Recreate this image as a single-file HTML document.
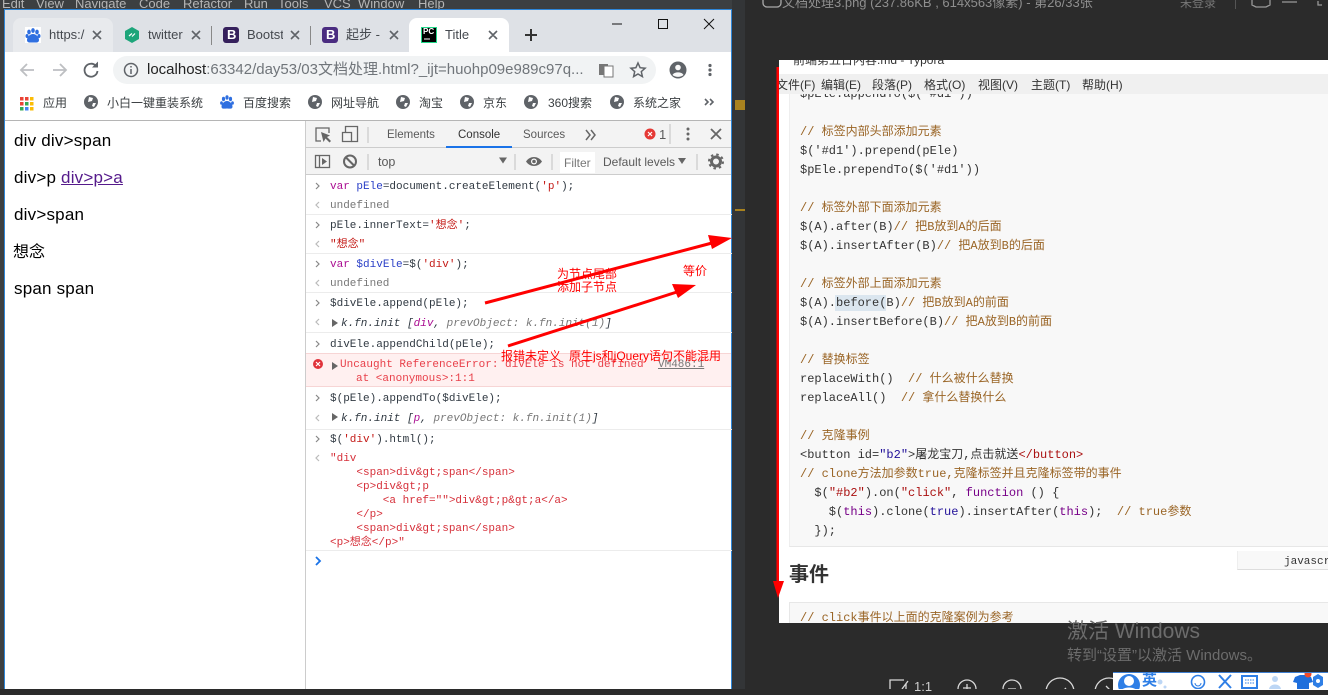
<!DOCTYPE html>
<html><head><meta charset="utf-8">
<style>
html,body{margin:0;padding:0;width:1328px;height:689px;overflow:hidden;background:#2b2b2b;font-family:"Liberation Sans","Noto Sans CJK SC",sans-serif}
.b{position:absolute}
.t{position:absolute;white-space:pre;line-height:16px}
.c{font:11px/16px "Liberation Mono","Noto Sans CJK SC",monospace;color:#303942;left:330px}
.g{color:#777}
.m{color:#aa0d91}.v{color:#2a3fc7}.s{color:#c41a16}.r{color:#d6303a}
.h{position:absolute;left:306px;width:426px;height:1px;background:#ececec}
.tab{font-size:13px;color:#45494f;width:36px;overflow:hidden;top:27px}
.bm{font-size:12px;color:#3c4043;top:95px}
.d{font-size:11.5px;color:#5a5a5a}
.p{position:absolute;white-space:pre;margin-top:1px;font:12px/16px "Liberation Mono","Noto Sans CJK SC",monospace;color:#333;left:21px}
.k{color:#9a6526}.q{color:#a11}.f{color:#708}.u{color:#219}
.a{color:#f00;font-size:12px;line-height:13px}
.mn{font-size:12px;color:#333;top:17px}
</style></head><body>

<!-- IDE behind -->
<div class="b" style="left:0;top:0;width:1328px;height:9px;background:#3c3f41"></div>
<div class="b" style="left:0;top:9px;width:5px;height:680px;background:#3c3f41"></div>
<div class="t" style="left:2px;top:-4px;font-size:13px;color:#b5b5b5">Edit</div>
<div class="t" style="left:36px;top:-4px;font-size:13px;color:#b5b5b5">View</div>
<div class="t" style="left:75px;top:-4px;font-size:13px;color:#b5b5b5">Navigate</div>
<div class="t" style="left:139px;top:-4px;font-size:13px;color:#b5b5b5">Code</div>
<div class="t" style="left:183px;top:-4px;font-size:13px;color:#b5b5b5">Refactor</div>
<div class="t" style="left:244px;top:-4px;font-size:13px;color:#b5b5b5">Run</div>
<div class="t" style="left:278px;top:-4px;font-size:13px;color:#b5b5b5">Tools</div>
<div class="t" style="left:324px;top:-4px;font-size:13px;color:#b5b5b5">VCS</div>
<div class="t" style="left:358px;top:-4px;font-size:13px;color:#b5b5b5">Window</div>
<div class="t" style="left:418px;top:-4px;font-size:13px;color:#b5b5b5">Help</div>

<!-- right dark area -->
<div class="b" style="left:732px;top:0;width:596px;height:689px;background:#2b2b2b"></div>
<div class="b" style="left:732px;top:0;width:13px;height:689px;background:#333537"></div>
<div class="b" style="left:735px;top:100px;width:10px;height:10px;background:#a8821f"></div>
<div class="b" style="left:735px;top:209px;width:10px;height:2px;background:#a8821f"></div>
<div class="t" style="left:782px;top:-5px;font-size:13px;color:#8f8f8f">文档处理3.png (237.86KB , 614x563像素) - 第26/33张</div>
<div class="t" style="left:1180px;top:-5px;font-size:12px;color:#777">未登录</div>
<div class="b" style="left:1235px;top:0;width:1px;height:9px;background:#555"></div>

<!-- picture -->
<div class="b" style="left:779px;top:60px;width:549px;height:563px;background:#fff;overflow:hidden">
  <div class="t" style="left:14px;top:-8px;font-size:12px;color:#333">前端第五日内容.md - Typora</div>
  <div class="b" style="left:10px;top:32px;width:539px;height:454px;background:#f8f8f8;border-bottom:1px solid #e7e7e7;border-left:1px solid #eee"></div>
  <div class="b" style="left:10px;top:542px;width:539px;height:30px;background:#f8f8f8;border:1px solid #e7e7e7"></div>
  <div class="p" style="top:25px">$pEle.appendTo($('#d1'))</div>
  <div class="b" style="left:0;top:14px;width:549px;height:20px;background:#f0f0f0"></div>
  <div class="t mn" style="left:-3px">文件(F)</div>
  <div class="t mn" style="left:42px">编辑(E)</div>
  <div class="t mn" style="left:93px">段落(P)</div>
  <div class="t mn" style="left:145px">格式(O)</div>
  <div class="t mn" style="left:199px">视图(V)</div>
  <div class="t mn" style="left:252px">主题(T)</div>
  <div class="t mn" style="left:303px">帮助(H)</div>
  <div class="p k" style="top:63px">// 标签内部头部添加元素</div>
  <div class="p" style="top:82px">$('#d1').prepend(pEle)</div>
  <div class="p" style="top:101px">$pEle.prependTo($('#d1'))</div>
  <div class="p k" style="top:139px">// 标签外部下面添加元素</div>
  <div class="p" style="top:158px">$(A).after(B)<span class="k">// 把B放到A的后面</span></div>
  <div class="p" style="top:177px">$(A).insertAfter(B)<span class="k">// 把A放到B的后面</span></div>
  <div class="p k" style="top:215px">// 标签外部上面添加元素</div>
  <div class="b" style="left:56px;top:235px;width:51px;height:16px;background:#dbe6ef"></div>
  <div class="p" style="top:234px">$(A).before(B)<span class="k">// 把B放到A的前面</span></div>
  <div class="p" style="top:253px">$(A).insertBefore(B)<span class="k">// 把A放到B的前面</span></div>
  <div class="p k" style="top:291px">// 替换标签</div>
  <div class="p" style="top:310px">replaceWith()  <span class="k">// 什么被什么替换</span></div>
  <div class="p" style="top:329px">replaceAll()  <span class="k">// 拿什么替换什么</span></div>
  <div class="p k" style="top:367px">// 克隆事例</div>
  <div class="p" style="top:386px">&lt;button id=<span class="u">"b2"</span>&gt;屠龙宝刀,点击就送<span class="q">&lt;/button&gt;</span></div>
  <div class="p k" style="top:405px">// clone方法加参数true,克隆标签并且克隆标签带的事件</div>
  <div class="p" style="top:424px">  $(<span class="q">"#b2"</span>).on(<span class="q">"click"</span>, <span class="f">function</span> () {</div>
  <div class="p" style="top:443px">    $(<span class="f">this</span>).clone(<span class="u">true</span>).insertAfter(<span class="f">this</span>);  <span class="k">// true参数</span></div>
  <div class="p" style="top:462px">  });</div>
  <div class="b" style="left:458px;top:491px;width:91px;height:18px;background:#f8f8f8;border-bottom:1px solid #ddd;border-left:1px solid #eee"></div>
  <div class="p" style="left:505px;top:493px;font-size:11px">javascript</div>
  <div class="t" style="left:10px;top:505px;font-size:20px;line-height:20px;font-weight:bold;color:#333">事件</div>
  <div class="p k" style="top:549px">// click事件以上面的克隆案例为参考</div>
</div>
<div class="t" style="left:1067px;top:622px;font-size:21px;line-height:20px;color:#6c6c6c">激活 Windows</div>
<div class="t" style="left:1067px;top:648px;font-size:15px;color:#6c6c6c">转到“设置”以激活 Windows。</div>

<!-- bottom viewer toolbar -->
<svg class="b" style="left:732px;top:0" width="596" height="689" fill="none" stroke="#d8d8d8" stroke-width="1.3">
  <path d="M31 0v3a4 4 0 0 0 4 4h10a4 4 0 0 0 4-4V0" stroke="#aaa"/>
  <path d="M520 0v5l4 2h10l4-2V0M550 2h15M586 1v4h4M600 1v4h-4" stroke="#999"/>
  <path d="M160 680h-2v9M158 680h14M174 684v5M176 681l-6 8" />
  <circle cx="235" cy="689" r="9"/><path d="M235 684v9M231 688h8"/>
  <circle cx="280" cy="689" r="9"/><path d="M276 689h8"/>
  <circle cx="328" cy="692" r="14"/><path d="M322 692l5 3 7-7"/>
  <circle cx="377" cy="692" r="14"/><path d="M374 686l6 6-6 6"/>
</svg>
<div class="t" style="left:914px;top:679px;font-size:13px;color:#d0d0d0">1:1</div>
<div class="b" style="left:1113px;top:672px;width:215px;height:17px;background:#fff;border-top:1px solid #3f7fd0"></div>
<svg class="b" style="left:1113px;top:673px" width="215" height="16">
  <circle cx="16" cy="12" r="11" fill="#2f7fe6"/><circle cx="16" cy="8" r="5" fill="#fff"/><path d="M7 19c2-6 16-6 18 0z" fill="#fff"/>
  <circle cx="47" cy="9" r="2.5" fill="#bcd6f5"/><circle cx="52" cy="14" r="1.5" fill="#bcd6f5"/>
  <circle cx="85" cy="9" r="6.5" fill="none" stroke="#2f7fe6" stroke-width="1.6"/><path d="M82 10a3 3 0 0 0 6 0" stroke="#2f7fe6" fill="none"/>
  <path d="M106 2l12 13M118 2l-12 13" stroke="#2f7fe6" stroke-width="2"/>
  <rect x="129" y="3" width="15" height="12" fill="none" stroke="#2f7fe6" stroke-width="2"/><path d="M132 7h9M132 10h9" stroke="#2f7fe6" stroke-dasharray="1.5 1"/>
  <circle cx="162" cy="6" r="3" fill="#bcd6f5"/><path d="M156 16c1-6 11-6 12 0z" fill="#bcd6f5"/>
  <path d="M182 4l5-2h6l5 2 2 5-4 1v6h-12v-6l-4-1z" fill="#1f6fdc"/>
  <circle cx="195" cy="1" r="3.5" fill="#f04a2a"/>
  <path d="M205 1l5 3h0v8l-5 3-5-3V4z" fill="#2f7fe6"/><circle cx="205" cy="8" r="2" fill="#fff"/>
</svg>
<div class="t" style="left:1142px;top:673px;font-size:15px;font-weight:bold;color:#2f7fe6">英</div>

<!-- browser window -->
<div class="b" style="left:4px;top:9px;width:728px;height:680px;background:#fff;border-top:1px solid #2e86d8;border-left:1px solid #2e86d8;border-right:1px solid #2e86d8;box-sizing:border-box"></div>
<div class="b" style="left:5px;top:10px;width:726px;height:42px;background:#dee1e6"></div>
<div class="b" style="left:13px;top:18px;width:100px;height:34px;background:#e8eaed;border-radius:8px 8px 0 0"></div>
<div class="b" style="left:409px;top:18px;width:100px;height:34px;background:#fff;border-radius:8px 8px 0 0"></div>
<div class="b" style="left:211px;top:26px;width:1px;height:19px;background:#888"></div>
<div class="b" style="left:310px;top:26px;width:1px;height:19px;background:#888"></div>
<div class="b" style="left:113px;top:56px;width:543px;height:28px;background:#f1f3f4;border-radius:14px"></div>

<div class="t tab" style="left:49px">https:/</div>
<div class="t tab" style="left:148px">twitter</div>
<div class="t tab" style="left:247px">Bootstrap</div>
<div class="t tab" style="left:346px">起步 -</div>
<div class="t tab" style="left:445px;width:40px">Title</div>

<svg class="b" style="left:0;top:0" width="732" height="120" fill="none">
  <rect x="25" y="27" width="16" height="16" fill="#fff"/>
  <g fill="#2f6fe0"><ellipse cx="29" cy="32" rx="1.8" ry="2.4"/><ellipse cx="37" cy="32" rx="1.8" ry="2.4"/><ellipse cx="33" cy="30.5" rx="1.8" ry="2.4"/><ellipse cx="27" cy="36" rx="1.5" ry="2"/><ellipse cx="39" cy="36" rx="1.5" ry="2"/><path d="M33 34c-3 0-6 3-6 6 0 3 3 2.500 6 2.500s6 .5 6-2.500c0-3-3-6-6-6z"/></g>
  <path d="M132 27l7 4v8l-7 4-7-4v-8z" fill="#1da57a"/><path d="M129 36l3-2.500M132 36.500l3-3" stroke="#fff" stroke-width="1.200"/>
  <rect x="223" y="27" width="16" height="16" rx="3" fill="#35205c"/>
  <rect x="322" y="27" width="16" height="16" rx="3" fill="#4a2c80"/>
  <rect x="421.500" y="27.500" width="15" height="15" fill="#000" stroke="#21d789"/>
  <path d="M424 39h6" stroke="#fff"/>
  <g stroke="#5f6368" stroke-width="1.600">
    <path d="M93 31l8 8M101 31l-8 8M192 31l8 8M200 31l-8 8M291 31l8 8M299 31l-8 8M390 31l8 8M398 31l-8 8M489 31l8 8M497 31l-8 8"/>
  </g>
  <path d="M525 35h12M531 29v12" stroke="#333" stroke-width="2"/>
  <path d="M612 24h10" stroke="#111"/><rect x="658.500" y="19.500" width="9" height="9" stroke="#111"/><path d="M704 19l10 10M714 19l-10 10" stroke="#111"/>
  <g stroke="#bdbfc2" stroke-width="1.800"><path d="M34 70H21M27 64l-6 6 6 6"/><path d="M53 70h13M60 64l6 6-6 6"/></g>
  <path d="M96 66a6.500 6.500 0 1 0 1.500 5" stroke="#5f6368" stroke-width="1.800"/><path d="M98 61.500v6h-6z" fill="#5f6368"/>
  <circle cx="131" cy="70" r="6.500" stroke="#5f6368" stroke-width="1.500"/><path d="M131 69v5M131 66v1.500" stroke="#5f6368" stroke-width="1.500"/>
  <rect x="599" y="64" width="9" height="11" fill="#777"/><rect x="604" y="66" width="9" height="11" fill="#fff" stroke="#777"/>
  <path d="M638 63l2.100 4.700 5 .5-3.800 3.400 1.100 5-4.400-2.600-4.400 2.600 1.100-5-3.800-3.400 5-.5z" stroke="#5f6368" stroke-width="1.500"/>
  <circle cx="678" cy="70" r="8.500" fill="#5f6368"/><circle cx="678" cy="67.500" r="2.800" fill="#f8f8f8"/><path d="M672.500 75c1.500-3.500 9.500-3.500 11 0-3 2.500-8 2.500-11 0z" fill="#f8f8f8"/>
  <g fill="#5f6368"><circle cx="710" cy="65.500" r="1.600"/><circle cx="710" cy="70" r="1.600"/><circle cx="710" cy="74.500" r="1.600"/></g>
  <g>
    <rect x="20" y="97" width="3.500" height="3.500" fill="#ea4335"/><rect x="25" y="97" width="3.500" height="3.500" fill="#ea4335"/><rect x="30" y="97" width="3.500" height="3.500" fill="#fbbc05"/>
    <rect x="20" y="102" width="3.500" height="3.500" fill="#ea4335"/><rect x="25" y="102" width="3.500" height="3.500" fill="#34a853"/><rect x="30" y="102" width="3.500" height="3.500" fill="#fbbc05"/>
    <rect x="20" y="107" width="3.500" height="3.500" fill="#34a853"/><rect x="25" y="107" width="3.500" height="3.500" fill="#4285f4"/><rect x="30" y="107" width="3.500" height="3.500" fill="#fbbc05"/>
  </g>
  <g fill="#5f6368">
    <circle cx="91" cy="102" r="7"/><circle cx="315" cy="102" r="7"/><circle cx="403" cy="102" r="7"/><circle cx="467" cy="102" r="7"/><circle cx="531" cy="102" r="7"/><circle cx="617" cy="102" r="7"/>
  </g>
  <g fill="#fff">
    <path d="M89 97l4 1-1 3-4 1zM93 103l3 0-2 4-2-1z"/><path d="M313 97l4 1-1 3-4 1zM317 103l3 0-2 4-2-1z"/><path d="M401 97l4 1-1 3-4 1zM405 103l3 0-2 4-2-1z"/><path d="M465 97l4 1-1 3-4 1zM469 103l3 0-2 4-2-1z"/><path d="M529 97l4 1-1 3-4 1zM533 103l3 0-2 4-2-1z"/><path d="M615 97l4 1-1 3-4 1zM619 103l3 0-2 4-2-1z"/>
  </g>
  <g fill="#2f6fe0"><ellipse cx="223.500" cy="99" rx="1.600" ry="2.200"/><ellipse cx="230.500" cy="99" rx="1.600" ry="2.200"/><ellipse cx="227" cy="97.500" rx="1.600" ry="2.200"/><ellipse cx="221.500" cy="103" rx="1.400" ry="1.800"/><ellipse cx="232.500" cy="103" rx="1.400" ry="1.800"/><path d="M227 101c-3 0-5.500 3-5.500 5.500 0 3 3 2 5.500 2s5.500 1 5.500-2c0-2.500-2.500-5.500-5.500-5.500z"/></g>
  <path d="M705 99l3 3-3 3M710 99l3 3-3 3" stroke="#5f6368" stroke-width="1.600"/>
</svg>
<div class="t" style="left:227px;top:27px;font-size:13px;font-weight:bold;color:#fff">B</div>
<div class="t" style="left:326px;top:27px;font-size:13px;font-weight:bold;color:#fff">B</div>
<div class="t" style="left:423px;top:27px;font-size:8px;line-height:9px;font-weight:bold;color:#fff">PC</div>

<div class="t" style="left:147px;top:62px;font-size:15px;color:#70757a"><span style="color:#222">localhost</span>:63342/day53/03文档处理.html?_ijt=huohp09e989c97q...</div>

<div class="t bm" style="left:43px">应用</div>
<div class="t bm" style="left:107px">小白一键重装系统</div>
<div class="t bm" style="left:243px">百度搜索</div>
<div class="t bm" style="left:331px">网址导航</div>
<div class="t bm" style="left:419px">淘宝</div>
<div class="t bm" style="left:483px">京东</div>
<div class="t bm" style="left:548px">360搜索</div>
<div class="t bm" style="left:633px">系统之家</div>

<!-- page -->
<div class="b" style="left:5px;top:120px;width:726px;height:1px;background:#b5b5b5"></div>
<div class="t" style="left:14px;top:133px;font-size:17px;letter-spacing:.2px;color:#000">div div&gt;span</div>
<div class="t" style="left:14px;top:170px;font-size:17px;letter-spacing:.2px;color:#000">div&gt;p <span style="color:#551a8b;text-decoration:underline">div&gt;p&gt;a</span></div>
<div class="t" style="left:14px;top:207px;font-size:17px;letter-spacing:.2px;color:#000">div&gt;span</div>
<div class="t" style="left:13px;top:245px;font-size:16px;color:#000">想念</div>
<div class="t" style="left:14px;top:281px;font-size:17px;letter-spacing:.2px;color:#000">span span</div>

<!-- devtools -->
<div class="b" style="left:305px;top:121px;width:1px;height:568px;background:#ccc"></div>
<div class="b" style="left:306px;top:121px;width:425px;height:53px;background:#f3f3f3"></div>
<div class="b" style="left:306px;top:147px;width:425px;height:1px;background:#ccc"></div>
<div class="b" style="left:306px;top:174px;width:425px;height:1px;background:#ccc"></div>
<div class="b" style="left:446px;top:146px;width:66px;height:2px;background:#1a73e8"></div>
<div class="b" style="left:560px;top:152px;width:35px;height:21px;background:#fff"></div>
<div class="t d" style="left:387px;top:127px">Elements</div>
<div class="t d" style="left:458px;top:127px;color:#333">Console</div>
<div class="t d" style="left:523px;top:127px">Sources</div>
<div class="t d" style="left:659px;top:127px;font-size:13px">1</div>
<div class="t d" style="left:378px;top:154px;font-size:12.5px">top</div>
<div class="t d" style="left:564px;top:155px;font-size:12px;color:#777">Filter</div>
<div class="t d" style="left:603px;top:154px;font-size:12px">Default levels</div>
<svg class="b" style="left:306px;top:121px" width="425" height="55" fill="none" stroke="#666" stroke-width="1.3">
  <path d="M15 20H10V7h13v5"/><path d="M15 11l2.500 10 2-3.500 4 4 1.500-1.500-4-4 3-1.500z" fill="#666" stroke="none"/>
  <path d="M36.500 11.500h9v9h-9z"/><path d="M39.500 11V5.500h12v15h-6"/>
  <path d="M62 6v16M62 33v16M209 33v16M246 33v16M391 33v16" stroke="#ccc"/>
  <path d="M280 9l4 5-4 5M285 9l4 5-4 5" stroke-width="1.500"/>
  <circle cx="344" cy="13" r="5.500" fill="#e53935" stroke="none"/><path d="M342 11l4 4M346 11l-4 4" stroke="#fff" stroke-width="1.200"/>
  <path d="M364 3v20" stroke="#ccc"/>
  <g fill="#666" stroke="none"><circle cx="382" cy="8" r="1.500"/><circle cx="382" cy="13" r="1.500"/><circle cx="382" cy="18" r="1.500"/></g>
  <path d="M405 8l10 10M415 8l-10 10" stroke-width="1.800"/>
  <rect x="9.500" y="34.500" width="14" height="12"/><path d="M13.500 34.500v12"/><path d="M16 37l5 3.500-5 3.500z" fill="#666" stroke="none"/>
  <circle cx="44" cy="40.500" r="6" stroke-width="2"/><path d="M40 36.500l8 8" stroke-width="2"/>
  <path d="M193 36.500h8l-4 6z" fill="#666" stroke="none"/>
  <path d="M220 40.500c4-6 12-6 16 0-4 6-12 6-16 0z" fill="#666" stroke="none"/><circle cx="228" cy="40.500" r="3" fill="#fff" stroke="none"/><circle cx="228" cy="40.500" r="1.800" fill="#666" stroke="none"/>
  <path d="M372 37h8l-4 6z" fill="#666" stroke="none"/>
  <circle cx="410" cy="40.500" r="4.500" stroke-width="3"/><circle cx="410" cy="40.500" r="7" stroke-width="2" stroke-dasharray="2.500 3"/>
</svg>

<!-- console -->
<div class="b" style="left:306px;top:353px;width:425px;height:34px;background:#fff0f0;border-top:1px solid #f7d5d5;border-bottom:1px solid #f7d5d5;box-sizing:border-box"></div>
<div class="h" style="top:214px"></div><div class="h" style="top:253px"></div><div class="h" style="top:292px"></div><div class="h" style="top:332px"></div><div class="h" style="top:429px"></div><div class="h" style="top:550px"></div>

<svg class="b" style="left:306px;top:175px" width="30" height="400" fill="none" stroke="#888" stroke-width="1.200">
  <path d="M10 8l3 3-3 3M10 47l3 3-3 3M10 86l3 3-3 3M10 125l3 3-3 3M10 166l3 3-3 3M10 220l3 3-3 3M10 261l3 3-3 3"/>
  <path d="M13 27l-3 3 3 3M13 66l-3 3 3 3M13 105l-3 3 3 3M13 144l-3 3 3 3M13 240l-3 3 3 3M13 280l-3 3 3 3" stroke="#bbb"/>
  <path d="M10 382l4 4-4 4" stroke="#1a73e8" stroke-width="1.800"/>
  <circle cx="12" cy="189" r="5" fill="#e0323a" stroke="none"/><path d="M10 187l4 4M14 187l-4 4" stroke="#fff"/>
</svg>
<svg class="b" style="left:330px;top:316px" width="12" height="110" fill="#666">
  <path d="M2 3v8l6-4z"/><path d="M2 97v8l6-4z"/>
</svg>
<svg class="b" style="left:331px;top:361px" width="10" height="10" fill="#666"><path d="M1 1v8l6-4z"/></svg>

<div class="t c" style="top:179px"><span class="m">var</span> <span class="v">pEle</span>=document.createElement(<span class="s">'p'</span>);</div>
<div class="t c g" style="top:198px">undefined</div>
<div class="t c" style="top:218px">pEle.innerText=<span class="s">'想念'</span>;</div>
<div class="t c s" style="top:237px">"想念"</div>
<div class="t c" style="top:257px"><span class="m">var</span> <span class="v">$divEle</span>=$(<span class="s">'div'</span>);</div>
<div class="t c g" style="top:276px">undefined</div>
<div class="t c" style="top:296px">$divEle.append(pEle);</div>
<div class="t c" style="top:316px;left:341px;font-style:italic">k.fn.init [<span class="m">div</span>, <span class="g">prevObject: k.fn.init(1)</span>]</div>
<div class="t c" style="top:337px">divEle.appendChild(pEle);</div>
<div class="t c" style="top:357px;left:340px;color:#e8404a">Uncaught ReferenceError: divEle is not defined</div>
<div class="t c" style="top:357px;left:658px;color:#777;text-decoration:underline">VM486:1</div>
<div class="t c" style="top:371px;left:356px;color:#e8404a">at &lt;anonymous&gt;:1:1</div>
<div class="t c" style="top:391px">$(pEle).appendTo($divEle);</div>
<div class="t c" style="top:411px;left:341px;font-style:italic">k.fn.init [<span class="m">p</span>, <span class="g">prevObject: k.fn.init(1)</span>]</div>
<div class="t c" style="top:432px">$(<span class="s">'div'</span>).html();</div>
<div class="t c r" style="top:451px">"div</div>
<div class="t c r" style="top:465px">    &lt;span&gt;div&amp;gt;span&lt;/span&gt;</div>
<div class="t c r" style="top:479px">    &lt;p&gt;div&amp;gt;p</div>
<div class="t c r" style="top:493px">        &lt;a href=""&gt;div&amp;gt;p&amp;gt;a&lt;/a&gt;</div>
<div class="t c r" style="top:507px">    &lt;/p&gt;</div>
<div class="t c r" style="top:521px">    &lt;span&gt;div&amp;gt;span&lt;/span&gt;</div>
<div class="t c r" style="top:535px">&lt;p&gt;想念&lt;/p&gt;"</div>

<!-- annotations -->
<svg class="b" style="left:0;top:0" width="1328" height="689" fill="#f00" stroke="none">
  <path d="M485 303L712 243" stroke="#f00" stroke-width="3"/>
  <path d="M732 238L708 235L712 249z"/>
  <path d="M508 346L680 291" stroke="#f00" stroke-width="3"/>
  <path d="M696 285L672 284L678 298z"/>
  <rect x="776.500" y="67" width="2.500" height="516"/>
  <path d="M773 581H784L778 598z"/>
</svg>
<div class="t a" style="left:557px;top:268px">为节点尾部</div>
<div class="t a" style="left:557px;top:281px">添加子节点</div>
<div class="t a" style="left:683px;top:265px">等价</div>
<div class="t a" style="left:501px;top:350px">报错未定义</div>
<div class="t a" style="left:569px;top:350px">原生js和jQuery语句不能混用</div>
</body></html>
